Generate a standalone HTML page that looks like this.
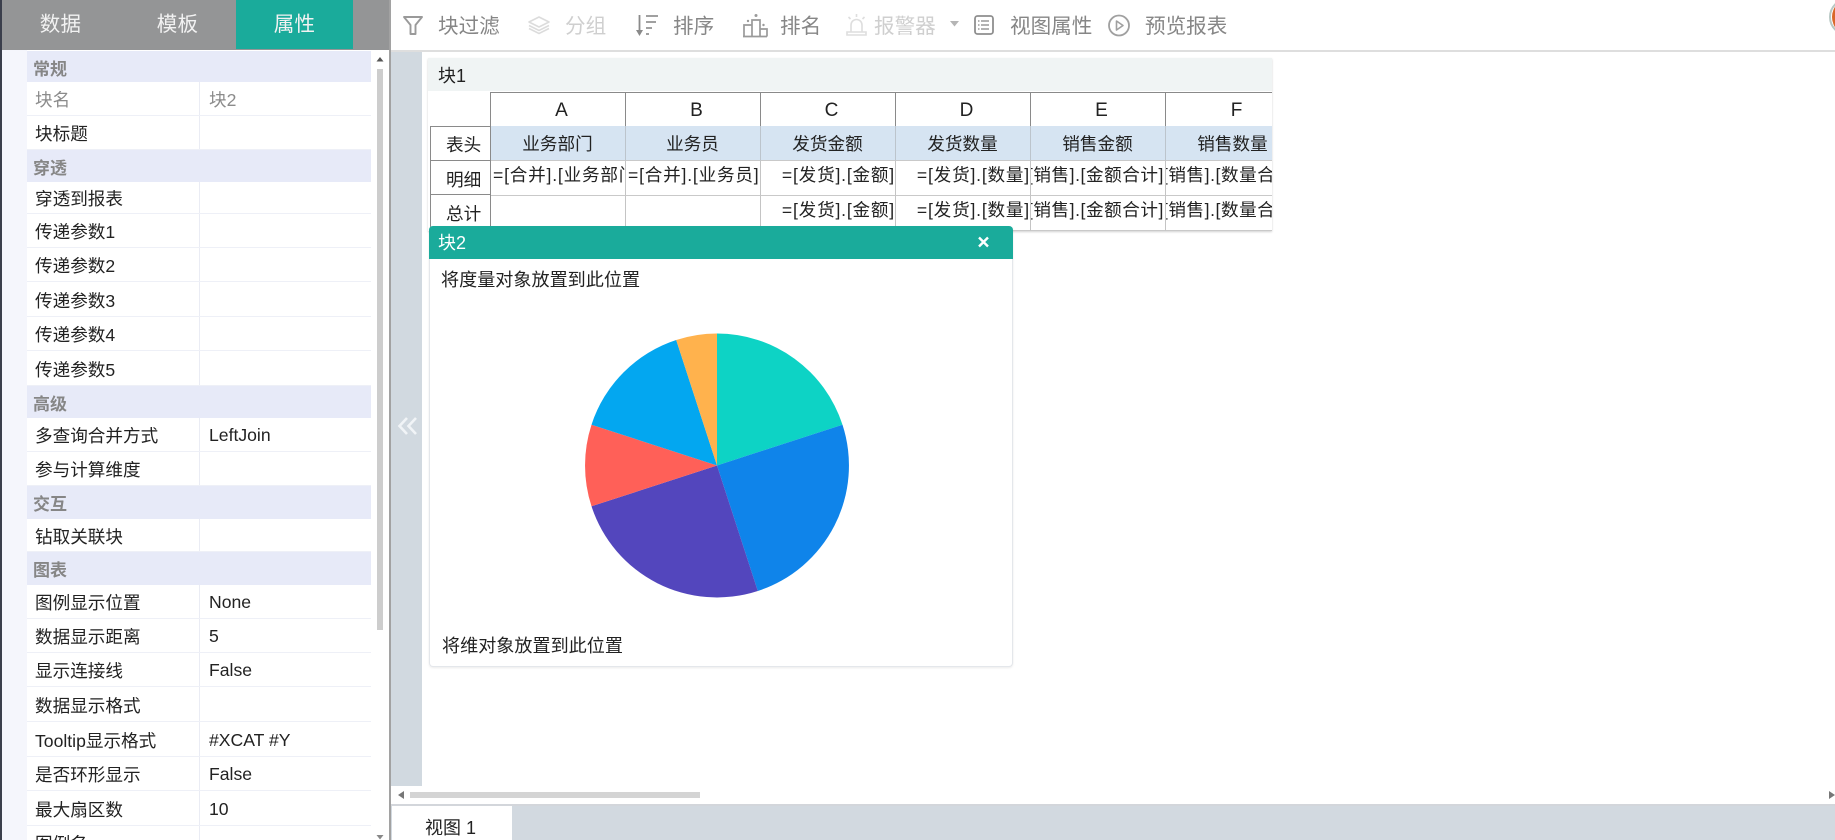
<!DOCTYPE html>
<html lang="zh-CN">
<head>
<meta charset="utf-8">
<title>属性</title>
<style>
html,body{margin:0;padding:0;width:1835px;height:840px;overflow:hidden;background:#fff}
body{position:relative;font-family:"Liberation Sans","Noto Sans CJK SC",sans-serif;color:#222}
div,span{position:absolute;box-sizing:border-box;white-space:nowrap}
#edge{left:0;top:0;width:2px;height:840px;background:#3b3f4c}
#tabs{left:2px;top:0;width:387px;height:50px;background:#949596}
.tab{top:0;height:49px;width:117px;line-height:49px;text-align:center;color:#f2f2f2;font-size:20.5px;letter-spacing:.3px}
#side{left:2px;top:50px;width:387px;height:790px;background:#fff}
#strip{left:2px;top:50px;width:25px;height:790px;background:#f5f6fc}
#sep{left:389px;top:0;width:2px;height:840px;background:#a2a2a2}
.s{left:27px;width:344px;background:#e7eaf8;color:#868686;font-size:17px;font-weight:bold;padding-left:6px;padding-top:4px}
.r{left:27px;width:344px;background:#fff;border-bottom:1px solid #eef0f7;font-size:17.6px;overflow:hidden}
.r i{position:absolute;left:172px;top:0;bottom:0;width:1px;background:#eaecf4}
.l{left:8px;top:1px;height:100%;display:flex;align-items:center}
.v{left:182px;top:1px;height:100%;display:flex;align-items:center}
.g{color:#8b8b8b}
#thumb{left:377px;top:69px;width:6px;height:561px;background:#cdcdcd}
.t{top:12px;height:30px;line-height:30px;font-size:20.6px;color:#868686}
.d{color:#cfcfcf}
#tline{left:391px;top:50px;width:1444px;height:2px;background:#dedede}
#gstrip{left:391px;top:52px;width:31px;height:734px;background:#d1d9e0}
#hthumb{left:410px;top:792px;width:290px;height:6px;background:#d4d4d4}
#bline{left:391px;top:804px;width:1444px;height:2px;background:#d3d6db}
#bbar{left:391px;top:806px;width:1444px;height:34px;background:#d2d9e0}
#vtab{left:392px;top:806px;width:120px;height:34px;background:#fff}
#vtxt{left:425px;top:814px;height:28px;line-height:28px;font-size:18px}
#b1{left:428px;top:58px;width:844px;height:173px;overflow:hidden;background:#fff;box-shadow:0 1px 2px rgba(0,0,0,.18)}
#b1h{left:0;top:0;width:844px;height:33px;background:#f0f4f4;font-size:18px;line-height:36px;padding-left:10px}
.c{font-size:17.6px;text-align:center;overflow:hidden}
.let{background:#fff;border-top:1px solid #8a8a8a;border-left:1px solid #8a8a8a;border-bottom:1px solid #8a8a8a;font-size:19px;line-height:36px;padding-left:6px;height:35px;top:34px;width:136px}
.hd{background:#d6e4f2;border-left:1px solid #bcc4cc;border-bottom:1px solid #c9c9c9;top:68px;height:35px;width:136px;line-height:37px;padding-right:2px}
.rh{left:2px;width:61px;border:1px solid #8a8a8a;border-top:0;padding-left:15px;text-align:left;background:#fff}
.dc{width:136px;height:35px;border-left:1px solid #c4c4c4;border-bottom:1px solid #c9c9c9;line-height:28px;text-align:left;background:#fff}
.dc b{position:absolute;font-weight:normal;top:0;white-space:nowrap;letter-spacing:.8px}
.dc b.n{letter-spacing:.55px}
#b2{left:429px;top:226px;width:584px;height:441px;background:#fff;border:1px solid #e4e7eb;border-top:0;border-radius:4px;box-shadow:0 1px 2px rgba(0,0,0,.08)}
#b2h{left:-1px;top:0;width:584px;height:33px;background:#1aab9b;border-radius:4px 4px 0 0;color:#fff;font-size:18px;line-height:35px;padding-left:9px}
</style>
</head>
<body>
<div id="tabs"></div>
<div id="side"></div>
<div id="strip"></div>
<div id="edge"></div>
<div class="tab" style="left:2px">数据</div>
<div class="tab" style="left:119px">模板</div>
<div class="tab" style="left:236px;background:#1aab9b">属性</div>

<div class="s" style="top:51px;height:31px">常规</div>
<div class="r" style="top:82px;height:34px"><i></i><span class="l g">块名</span><span class="v g">块2</span></div>
<div class="r" style="top:116px;height:34px"><i></i><span class="l">块标题</span></div>
<div class="s" style="top:150px;height:32px">穿透</div>
<div class="r" style="top:182px;height:32px"><i></i><span class="l">穿透到报表</span></div>
<div class="r" style="top:214px;height:34px"><i></i><span class="l">传递参数1</span></div>
<div class="r" style="top:248px;height:34px"><i></i><span class="l">传递参数2</span></div>
<div class="r" style="top:282px;height:35px"><i></i><span class="l">传递参数3</span></div>
<div class="r" style="top:317px;height:34px"><i></i><span class="l">传递参数4</span></div>
<div class="r" style="top:351px;height:35px"><i></i><span class="l">传递参数5</span></div>
<div class="s" style="top:386px;height:32px">高级</div>
<div class="r" style="top:418px;height:34px"><i></i><span class="l">多查询合并方式</span><span class="v">LeftJoin</span></div>
<div class="r" style="top:452px;height:34px"><i></i><span class="l">参与计算维度</span></div>
<div class="s" style="top:486px;height:33px">交互</div>
<div class="r" style="top:519px;height:33px"><i></i><span class="l">钻取关联块</span></div>
<div class="s" style="top:552px;height:33px">图表</div>
<div class="r" style="top:585px;height:34px"><i></i><span class="l">图例显示位置</span><span class="v">None</span></div>
<div class="r" style="top:619px;height:34px"><i></i><span class="l">数据显示距离</span><span class="v">5</span></div>
<div class="r" style="top:653px;height:34px"><i></i><span class="l">显示连接线</span><span class="v">False</span></div>
<div class="r" style="top:687px;height:35px"><i></i><span class="l">数据显示格式</span></div>
<div class="r" style="top:722px;height:35px"><i></i><span class="l">Tooltip显示格式</span><span class="v">#XCAT #Y</span></div>
<div class="r" style="top:757px;height:34px"><i></i><span class="l">是否环形显示</span><span class="v">False</span></div>
<div class="r" style="top:791px;height:35px"><i></i><span class="l">最大扇区数</span><span class="v">10</span></div>
<div class="r" style="top:826px;height:34px"><i></i><span class="l">图例名</span></div>

<div id="thumb"></div>
<div id="sep"></div>

<div class="t" style="left:438px">块过滤</div>
<div class="t d" style="left:565px">分组</div>
<div class="t" style="left:673px">排序</div>
<div class="t" style="left:780px">排名</div>
<div class="t d" style="left:874px">报警器</div>
<div class="t" style="left:1010px">视图属性</div>
<div class="t" style="left:1145px">预览报表</div>

<div id="tline"></div>
<div id="gstrip"></div>
<div id="hthumb"></div>
<div id="bline"></div>
<div id="bbar"></div>
<div id="vtab"></div>
<div id="vtxt">视图 1</div>

<div id="b1">
  <div id="b1h">块1</div>
  <div class="let c" style="left:62px">A</div>
  <div class="let c" style="left:197px">B</div>
  <div class="let c" style="left:332px">C</div>
  <div class="let c" style="left:467px">D</div>
  <div class="let c" style="left:602px">E</div>
  <div class="let c" style="left:737px">F</div>

  <div class="hd c" style="left:62px;border-left-color:#8a8a8a">业务部门</div>
  <div class="hd c" style="left:197px">业务员</div>
  <div class="hd c" style="left:332px">发货金额</div>
  <div class="hd c" style="left:467px">发货数量</div>
  <div class="hd c" style="left:602px">销售金额</div>
  <div class="hd c" style="left:737px">销售数量</div>

  <div class="c dc" style="left:62px;top:103px"><b style="left:2px">=[合并].[业务部门]</b></div>
  <div class="c dc" style="left:197px;top:103px"><b style="left:2px">=[合并].[业务员]</b></div>
  <div class="c dc" style="left:332px;top:103px"><b style="right:1px">=[发货].[金额]</b></div>
  <div class="c dc" style="left:467px;top:103px"><b style="right:1px">=[发货].[数量]</b></div>
  <div class="c dc" style="left:602px;top:103px"><b class="n" style="right:2px">=[销售].[金额合计]</b></div>
  <div class="c dc" style="left:737px;top:103px"><b class="n" style="right:2px">=[销售].[数量合计]</b></div>

  <div class="c dc" style="left:62px;top:138px"></div>
  <div class="c dc" style="left:197px;top:138px"></div>
  <div class="c dc" style="left:332px;top:138px"><b style="right:1px">=[发货].[金额]</b></div>
  <div class="c dc" style="left:467px;top:138px"><b style="right:1px">=[发货].[数量]</b></div>
  <div class="c dc" style="left:602px;top:138px"><b class="n" style="right:2px">=[销售].[金额合计]</b></div>
  <div class="c dc" style="left:737px;top:138px"><b class="n" style="right:2px">=[销售].[数量合计]</b></div>

  <div class="c rh" style="top:68px;height:35px;line-height:36px;border-top:1px solid #8a8a8a">表头</div>
  <div class="c rh" style="top:103px;height:34px;line-height:38px">明细</div>
  <div class="c rh" style="top:137px;height:36px;line-height:38px">总计</div>
</div>

<div id="b2">
  <div id="b2h">块2</div>
  <div style="left:11px;top:40px;height:28px;line-height:28px;font-size:18.1px">将度量对象放置到此位置</div>
  <div style="left:12px;top:406px;height:28px;line-height:28px;font-size:18.1px">将维对象放置到此位置</div>
</div>

<svg style="position:absolute;left:0;top:0" width="1835" height="840" viewBox="0 0 1835 840" fill="none">
  <!-- pie -->
  <path d="M717 465.5 L717 333.5 A132 132 0 0 1 842.5 424.7 Z" fill="#0dd3c5"/>
  <path d="M717 465.5 L842.5 424.7 A132 132 0 0 1 757.8 591 Z" fill="#0f84ea"/>
  <path d="M717 465.5 L757.8 591 A132 132 0 0 1 591.5 506.3 Z" fill="#5346bd"/>
  <path d="M717 465.5 L591.5 506.3 A132 132 0 0 1 591.5 424.7 Z" fill="#ff6058"/>
  <path d="M717 465.5 L591.5 424.7 A132 132 0 0 1 676.2 340 Z" fill="#03a7f0"/>
  <path d="M717 465.5 L676.2 340 A132 132 0 0 1 717 333.5 Z" fill="#ffb24d"/>

  <!-- close -->
  <path d="M979 237.5 L988 246.5 M988 237.5 L979 246.5" stroke="#fff" stroke-width="2.4"/>

  <!-- funnel -->
  <path d="M404 17 H422 L415.5 25 V34 H410.5 V25 Z" stroke="#9a9a9a" stroke-width="1.9" stroke-linejoin="round"/>
  <!-- layers -->
  <path d="M539 17 L549 22 L539 27 L529 22 Z" stroke="#dcdcdc" stroke-width="1.6" stroke-linejoin="round"/>
  <path d="M529 25.5 L539 30.5 L549 25.5 M529 28.5 L539 33.5 L549 28.5" stroke="#dcdcdc" stroke-width="1.6"/>
  <!-- sort -->
  <path d="M639.5 15 V32" stroke="#8a8a8a" stroke-width="1.8"/>
  <path d="M636 30 L639.5 36 L643 30 Z" fill="#8a8a8a"/>
  <path d="M646 16 H658 M646 22 H656 M646 28 H652 M646 34 H649" stroke="#a0a0a0" stroke-width="2"/>
  <!-- rank -->
  <path d="M744 36.5 V25 H752 V36.5 M752 36.5 V20 H760 V36.5 M760 29 H767 V36.5 M743 36.5 H767" stroke="#9a9a9a" stroke-width="1.7"/>
  <circle cx="756" cy="15.5" r="1.5" fill="#9a9a9a"/>
  <circle cx="748" cy="21" r="1.2" fill="#9a9a9a"/>
  <circle cx="763.5" cy="25" r="1.2" fill="#9a9a9a"/>
  <!-- alarm -->
  <path d="M851 32 V25 A5.5 5.5 0 0 1 862 25 V32 M847 35 H866 V32 H847 Z" stroke="#dedede" stroke-width="1.6"/>
  <path d="M856.5 14 V17 M848.5 17 L850.5 19 M864.5 17 L862.5 19" stroke="#dedede" stroke-width="1.6"/>
  <!-- caret -->
  <path d="M950 21 H959 L954.5 26.5 Z" fill="#b5b5b5"/>
  <!-- view props -->
  <rect x="975" y="16" width="18" height="18" rx="2.5" stroke="#8f8f8f" stroke-width="1.8"/>
  <path d="M981 21 H989 M981 25 H989 M981 29 H989" stroke="#9a9a9a" stroke-width="1.5"/>
  <path d="M978 21 H979.5 M978 25 H979.5 M978 29 H979.5" stroke="#9a9a9a" stroke-width="1.5"/>
  <!-- preview -->
  <circle cx="1119" cy="25.5" r="10" stroke="#a0a0a0" stroke-width="1.8"/>
  <path d="M1116.5 21 L1123 25.5 L1116.5 30 Z" stroke="#a0a0a0" stroke-width="1.6" stroke-linejoin="round"/>

  <!-- avatar -->
  <circle cx="1848" cy="17" r="18" fill="#fff" stroke="#b8c8c4" stroke-width="2"/>
  <circle cx="1851" cy="17" r="19" fill="#d9682a"/>

  <!-- collapse arrows -->
  <path d="M407 418 L399.5 426 L407 434 M416 418 L408.5 426 L416 434" stroke="#f1f4f7" stroke-width="2.6"/>

  <!-- scroll arrows -->
  <path d="M376.5 61.5 L380 57 L383.5 61.5 Z" fill="#555"/>
  <path d="M376.5 835 L380 839.5 L383.5 835 Z" fill="#888"/>
  <path d="M404 791 L398 795 L404 799 Z" fill="#777"/>
  <path d="M1829 791 L1835 795 L1829 799 Z" fill="#777"/>
</svg>
</body>
</html>
